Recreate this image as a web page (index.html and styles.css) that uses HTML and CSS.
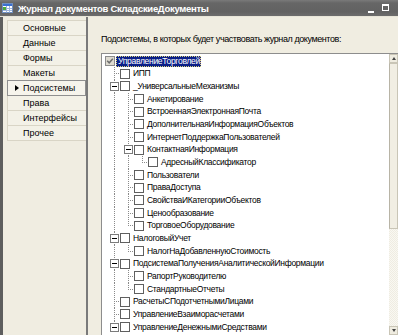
FILE: index.html
```html
<!DOCTYPE html>
<html lang="ru">
<head>
<meta charset="utf-8">
<title>Журнал документов СкладскиеДокументы</title>
<link rel="stylesheet" href="styles.css">
</head>
<body>
<div class="window">
  <div class="titlebar">
    <svg class="appicon" width="11" height="10" viewBox="0 0 11 10">
      <rect x="0.5" y="0.5" width="10" height="9" fill="#ffffff" stroke="#6f8fc0"/>
      <rect x="1" y="1" width="9" height="2" fill="#3a6fd0"/>
      <path d="M1 5.5H10M1 7.5H10M4.5 3V9.5M7.5 3V9.5" stroke="#9db4dc" stroke-width="1"/>
      <rect x="1" y="4" width="3" height="3" fill="#4caa3c"/>
    </svg>
    <span class="title">Журнал документов СкладскиеДокументы</span>
    <div class="winbtns">
      <span class="btn-min"></span>
      <span class="btn-max"></span>
      <svg class="btn-close" width="8" height="8" viewBox="0 0 8 8"><path d="M1 1L7 7M7 1L1 7" stroke="#ffffff" stroke-width="1.6"/></svg>
    </div>
  </div>
  <div class="main">
    <div class="tabs">
      <div class="tab"><span class="mark"></span>Основные</div>
      <div class="tab"><span class="mark"></span>Данные</div>
      <div class="tab"><span class="mark"></span>Формы</div>
      <div class="tab"><span class="mark"></span>Макеты</div>
      <div class="tab active"><span class="mark"><i class="arrow"></i></span>Подсистемы</div>
      <div class="tab"><span class="mark"></span>Права</div>
      <div class="tab"><span class="mark"></span>Интерфейсы</div>
      <div class="tab"><span class="mark"></span>Прочее</div>
    </div>
    <div class="content">
      <div class="label">Подсистемы, в которых будет участвовать журнал документов:</div>
      <div class="treebox">
        <div class="tree">
          <div class="row root"><span class="cb checked"><svg width="8" height="8" viewBox="0 0 8 8"><path d="M1.2 3.8L3.2 5.8L6.8 1.8" fill="none" stroke="#6c6c6c" stroke-width="1.5"/></svg></span><span class="t sel">УправлениеТорговлей</span></div>
          <div class="row"><i class="g tee"></i><span class="cb"></span><span class="t">ИПП</span></div>
          <div class="row"><i class="g tee"><b class="exp"></b></i><span class="cb"></span><span class="t">_УниверсальныеМеханизмы</span></div>
          <div class="row"><i class="g pipe"></i><i class="g tee"></i><span class="cb"></span><span class="t">Анкетирование</span></div>
          <div class="row"><i class="g pipe"></i><i class="g tee"></i><span class="cb"></span><span class="t">ВстроеннаяЭлектроннаяПочта</span></div>
          <div class="row"><i class="g pipe"></i><i class="g tee"></i><span class="cb"></span><span class="t">ДополнительнаяИнформацияОбъектов</span></div>
          <div class="row"><i class="g pipe"></i><i class="g tee"></i><span class="cb"></span><span class="t">ИнтернетПоддержкаПользователей</span></div>
          <div class="row"><i class="g pipe"></i><i class="g tee"><b class="exp"></b></i><span class="cb"></span><span class="t">КонтактнаяИнформация</span></div>
          <div class="row"><i class="g pipe"></i><i class="g pipe"></i><i class="g elbow"></i><span class="cb"></span><span class="t">АдресныйКлассификатор</span></div>
          <div class="row"><i class="g pipe"></i><i class="g tee"></i><span class="cb"></span><span class="t">Пользователи</span></div>
          <div class="row"><i class="g pipe"></i><i class="g tee"></i><span class="cb"></span><span class="t">ПраваДоступа</span></div>
          <div class="row"><i class="g pipe"></i><i class="g tee"></i><span class="cb"></span><span class="t">СвойстваИКатегорииОбъектов</span></div>
          <div class="row"><i class="g pipe"></i><i class="g tee"></i><span class="cb"></span><span class="t">Ценообразование</span></div>
          <div class="row"><i class="g pipe"></i><i class="g elbow"></i><span class="cb"></span><span class="t">ТорговоеОборудование</span></div>
          <div class="row"><i class="g tee"><b class="exp"></b></i><span class="cb"></span><span class="t">НалоговыйУчет</span></div>
          <div class="row"><i class="g pipe"></i><i class="g elbow"></i><span class="cb"></span><span class="t">НалогНаДобавленнуюСтоимость</span></div>
          <div class="row"><i class="g tee"><b class="exp"></b></i><span class="cb"></span><span class="t">ПодсистемаПолученияАналитическойИнформации</span></div>
          <div class="row"><i class="g pipe"></i><i class="g tee"></i><span class="cb"></span><span class="t">РапортРуководителю</span></div>
          <div class="row"><i class="g pipe"></i><i class="g elbow"></i><span class="cb"></span><span class="t">СтандартныеОтчеты</span></div>
          <div class="row"><i class="g tee"></i><span class="cb"></span><span class="t">РасчетыСПодотчетнымиЛицами</span></div>
          <div class="row"><i class="g tee"></i><span class="cb"></span><span class="t">УправлениеВзаиморасчетами</span></div>
          <div class="row"><i class="g tee"><b class="exp"></b></i><span class="cb"></span><span class="t">УправлениеДенежнымиСредствами</span></div>
        </div>
        <div class="scrollbar">
          <div class="sb-btn"><i class="up"></i></div>
          <div class="sb-track">
            <div class="sb-thumb"></div>
            <div class="sb-rest"></div>
          </div>
          <div class="sb-btn"><i class="down"></i></div>
        </div>
      </div>
    </div>
  </div>
</div>
</body>
</html>
```

FILE: styles.css
```css
html, body {
  margin: 0;
  padding: 0;
}
body {
  width: 398px;
  height: 335px;
  overflow: hidden;
  background: #f0ede1;
  font-family: "Liberation Sans", Arial, sans-serif;
  font-size: 9px;
  color: #000;
}
.window {
  width: 404px;
  height: 335px;
  display: flex;
  flex-direction: column;
}
.titlebar {
  height: 17px;
  flex: none;
  display: flex;
  align-items: center;
  background: linear-gradient(to bottom, #7a7a7a 0, #666 3px, #626262 12px, #6c6c6c 16px, #e8e5d8 16px);
  color: #fff;
  padding-left: 2px;
  box-sizing: border-box;
}
.appicon {
  display: block;
  margin-top: -1px;
}
.title {
  margin-left: 5px;
  font-weight: bold;
  font-size: 9.5px;
  letter-spacing: -0.3px;
  white-space: nowrap;
  margin-top: -1px;
}
.winbtns {
  margin-left: auto;
  display: flex;
  align-items: center;
  height: 16px;
  margin-right: 0;
}
.btn-min {
  width: 6px;
  height: 2px;
  background: #fff;
  margin-top: 6px;
}
.btn-max {
  width: 7px;
  height: 7px;
  box-sizing: border-box;
  border: 1px solid #fff;
  border-top-width: 2px;
  margin-left: 8px;
  margin-top: -2px;
}
.btn-close {
  display: block;
  margin-left: 9px;
  margin-right: -2px;
  margin-top: -1px;
}
.main {
  flex: 1;
  display: flex;
  border-left: 3px solid #5e5e5e;
  min-height: 0;
}
.tabs {
  width: 79px;
  flex: none;
  border-right: 2px solid #7a7a7a;
  padding: 3px 0 0 4px;
  box-sizing: content-box;
}
.tab {
  height: 16px;
  margin-bottom: -1px;
  box-sizing: border-box;
  border: 1px solid #d9d5c6;
  border-right: none;
  background: #f3f1e7;
  display: flex;
  align-items: center;
  padding-left: 7px;
  white-space: nowrap;
  position: relative;
}
.tab.active {
  border-color: #8f8f8f;
  border-right: 1px solid #8f8f8f;
  z-index: 1;
  background: #f6f4ec;
}
.mark {
  width: 8px;
  flex: none;
  display: flex;
  align-items: center;
}
.arrow {
  display: block;
  width: 0;
  height: 0;
  border-left: 4px solid #000;
  border-top: 3.5px solid transparent;
  border-bottom: 3.5px solid transparent;
}
.content {
  flex: 1;
  display: flex;
  flex-direction: column;
  padding: 17px 0 0 13px;
  min-width: 0;
}
.label {
  height: 11px;
  line-height: 11px;
  white-space: nowrap;
  letter-spacing: -0.42px;
}
.treebox {
  margin-top: 8px;
  width: 298px;
  flex: 1;
  display: flex;
  box-sizing: border-box;
  border: 1px solid #8d8d8d;
  border-right-color: #d6d2c4;
  border-bottom: none;
  background: #fff;
  min-height: 0;
}
.tree {
  flex: 1;
  padding: 0.7px 0 0 4px;
  overflow: hidden;
  --dot: #8a8a8a;
}
.row {
  height: 12.68px;
  display: flex;
  align-items: center;
  white-space: nowrap;
}
.g {
  width: 14px;
  height: 100%;
  flex: none;
  display: flex;
  align-items: center;
}
.g.pipe {
  background: repeating-linear-gradient(to bottom, var(--dot) 0 1px, transparent 1px 2px) 8px 0 / 1px 100% no-repeat;
}
.g.tee {
  background:
    repeating-linear-gradient(to bottom, var(--dot) 0 1px, transparent 1px 2px) 8px 0 / 1px 100% no-repeat,
    repeating-linear-gradient(to right, var(--dot) 0 1px, transparent 1px 2px) 10px 6px / 4px 1px no-repeat;
}
.g.elbow {
  background:
    repeating-linear-gradient(to bottom, var(--dot) 0 1px, transparent 1px 2px) 8px 0 / 1px 7px no-repeat,
    repeating-linear-gradient(to right, var(--dot) 0 1px, transparent 1px 2px) 10px 6px / 4px 1px no-repeat;
}
.exp {
  display: block;
  width: 9px;
  height: 9px;
  box-sizing: border-box;
  margin-left: 4px;
  border: 1px solid #7b7b7b;
  background: #fff linear-gradient(#000, #000) 1px 3px / 5px 1px no-repeat;
}
.cb {
  width: 10px;
  height: 10px;
  flex: none;
  box-sizing: border-box;
  border: 1px solid #5f5f5f;
  background: #fff;
  display: flex;
  align-items: center;
  justify-content: center;
}
.root .cb {
  margin-left: -1px;
}
.cb.checked {
  background: #dedbd0;
  border-color: #8c8c8c;
}
.cb.checked svg {
  display: block;
}
.t {
  margin-left: 3px;
  font-size: 8.5px;
  letter-spacing: -0.3px;
  line-height: 11px;
}
.t.sel {
  margin-left: 1px;
  padding: 0 1px 0 2px;
  background: #0b1f88;
  color: #fff;
  outline: 1px dotted #d9d27a;
  outline-offset: -1px;
}
.scrollbar {
  width: 9px;
  flex: none;
  display: flex;
  flex-direction: column;
  background: #f6f4ec;
}
.sb-btn {
  height: 9px;
  flex: none;
  box-sizing: border-box;
  border: 1px solid #c9c5b6;
  background: #efece0;
  display: flex;
  align-items: center;
  justify-content: center;
}
.up {
  display: block;
  width: 0;
  height: 0;
  border-bottom: 3px solid #444;
  border-left: 2.5px solid transparent;
  border-right: 2.5px solid transparent;
}
.down {
  display: block;
  width: 0;
  height: 0;
  border-top: 3px solid #444;
  border-left: 2.5px solid transparent;
  border-right: 2.5px solid transparent;
}
.sb-track {
  flex: 1;
  display: flex;
  flex-direction: column;
}
.sb-thumb {
  height: 166px;
  box-sizing: border-box;
  border: 1px solid #c9c5b6;
  border-left-color: #b8b4a6;
  background: #f1eee3;
}
.sb-rest {
  flex: 1;
  background: repeating-conic-gradient(#f9f8f2 0 25%, #efece2 0 50%) 0 0 / 2px 2px;
}
```
